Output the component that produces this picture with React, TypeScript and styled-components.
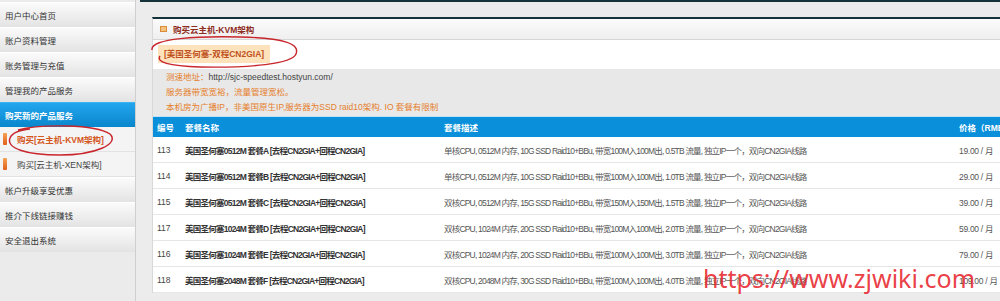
import React from "react";
import styled, { createGlobalStyle } from "styled-components";

const GlobalStyle = createGlobalStyle`
  html, body {
    margin: 0;
    padding: 0;
    background: #ececec;
    font-family: "Liberation Sans", "Noto Sans CJK SC", sans-serif;
  }
`;

type Plan = { id: string; name: string; desc: string; price: string };

const plans: Plan[] = [
  { id: "113", name: "美国圣何塞0512M 套餐A [去程CN2GIA+回程CN2GIA]", desc: "单核CPU, 0512M 内存, 10G SSD Raid10+BBu, 带宽100M入100M出, 0.5TB 流量, 独立IP一个，双向CN2GIA线路", price: "19.00 / 月" },
  { id: "114", name: "美国圣何塞0512M 套餐B [去程CN2GIA+回程CN2GIA]", desc: "单核CPU, 0512M 内存, 10G SSD Raid10+BBu, 带宽100M入100M出, 1.0TB 流量, 独立IP一个，双向CN2GIA线路", price: "29.00 / 月" },
  { id: "115", name: "美国圣何塞0512M 套餐C [去程CN2GIA+回程CN2GIA]", desc: "双核CPU, 0512M 内存, 15G SSD Raid10+BBu, 带宽150M入150M出, 1.5TB 流量, 独立IP一个，双向CN2GIA线路", price: "39.00 / 月" },
  { id: "117", name: "美国圣何塞1024M 套餐D [去程CN2GIA+回程CN2GIA]", desc: "双核CPU, 1024M 内存, 20G SSD Raid10+BBu, 带宽100M入100M出, 2.0TB 流量, 独立IP一个，双向CN2GIA线路", price: "59.00 / 月" },
  { id: "116", name: "美国圣何塞1024M 套餐E [去程CN2GIA+回程CN2GIA]", desc: "双核CPU, 1024M 内存, 20G SSD Raid10+BBu, 带宽100M入100M出, 3.0TB 流量, 独立IP一个，双向CN2GIA线路", price: "79.00 / 月" },
  { id: "118", name: "美国圣何塞2048M 套餐F [去程CN2GIA+回程CN2GIA]", desc: "双核CPU, 2048M 内存, 30G SSD Raid10+BBu, 带宽100M入100M出, 4.0TB 流量, 独立IP一个，双向CN2GIA线路", price: "109.00 / 月" },
];

const App = () => {
  return (
    <Page>
      <GlobalStyle />
      <Sidebar>
        <MenuItem>用户中心首页</MenuItem>
        <MenuItem>账户资料管理</MenuItem>
        <MenuItem>账务管理与充值</MenuItem>
        <MenuItem>管理我的产品服务</MenuItem>
        <MenuItem active>购买新的产品服务</MenuItem>
        <SubItem current>
          <SubIcon />
          购买[云主机-KVM架构]
        </SubItem>
        <SubItem>
          <SubIcon />
          购买[云主机-XEN架构]
        </SubItem>
        <MenuItem>帐户升级享受优惠</MenuItem>
        <MenuItem>推介下线链接赚钱</MenuItem>
        <MenuItem>安全退出系统</MenuItem>
      </Sidebar>

      <Main>
        <Panel>
          <PanelHeader>
            <HeaderIcon />
            购买云主机-KVM架构
          </PanelHeader>
          <TagStrip>
            <Tag>[美国圣何塞-双程CN2GIA]</Tag>
          </TagStrip>
          <Info>
            <InfoLine>
              测速地址：<Url>http://sjc-speedtest.hostyun.com/</Url>
            </InfoLine>
            <InfoLine>服务器带宽宽裕，流量管理宽松。</InfoLine>
            <InfoLine>本机房为广播IP，非美国原生IP,服务器为SSD raid10架构. IO 套餐有限制</InfoLine>
          </Info>
          <Table>
            <HeadRow>
              <Cell>编号</Cell>
              <Cell>套餐名称</Cell>
              <Cell>套餐描述</Cell>
              <Cell>价格（RMB)</Cell>
            </HeadRow>
            {plans.map((p) => (
              <Row key={p.id}>
                <Cell>{p.id}</Cell>
                <NameCell>{p.name}</NameCell>
                <DescCell>{p.desc}</DescCell>
                <PriceCell>{p.price}</PriceCell>
              </Row>
            ))}
          </Table>
        </Panel>
      </Main>

      <Marks width="1000" height="301" viewBox="0 0 1000 301">
        <path d="M152 50 C150 38, 200 36, 240 37 C285 38, 300 44, 296 54 C292 64, 250 68, 200 67 C168 66, 156 62, 160 56" fill="none" stroke="#c8262c" strokeWidth="1.4" />
        <path d="M18 130 C40 124, 95 124, 110 134 C120 144, 95 155, 60 155 C25 155, 6 148, 10 138 C12 133, 20 130, 30 129" fill="none" stroke="#c8262c" strokeWidth="1.4" />
      </Marks>
      <Watermark>https://www.zjwiki.com</Watermark>
    </Page>
  );
};

export default App;

const Page = styled.div`
  position: relative;
  display: flex;
  gap: 4px;
  width: 1000px;
  height: 301px;
  overflow: hidden;
  background: #ececec;
`;

const Sidebar = styled.div`
  flex: 0 0 135px;
  padding-top: 2px;
  border-right: 1px solid #cfcfcf;
  background: #ebebeb;
`;

const MenuItem = styled.div<{ active?: boolean }>`
  height: 25px;
  box-sizing: border-box;
  padding-left: 5px;
  display: flex;
  align-items: center;
  font-size: 8.5px;
  border-top: 1px solid ${({ active }) => (active ? "#3db3f0" : "#ffffff")};
  color: ${({ active }) => (active ? "#ffffff" : "#333333")};
  font-weight: ${({ active }) => (active ? "bold" : "normal")};
  background: ${({ active }) =>
    active
      ? "linear-gradient(#22a6ee, #0a86cc)"
      : "linear-gradient(#fbfbfb, #e3e3e3)"};
`;

const SubItem = styled.div<{ current?: boolean }>`
  height: 25px;
  box-sizing: border-box;
  display: flex;
  align-items: center;
  gap: 10px;
  padding-left: 3px;
  font-size: 8.5px;
  background: #f4f4f4;
  border-bottom: 1px solid #e2e2e2;
  color: ${({ current }) => (current ? "#d4581e" : "#444444")};
  font-weight: ${({ current }) => (current ? "bold" : "normal")};
`;

const SubIcon = styled.span`
  width: 4px;
  height: 12px;
  border-radius: 1px;
  background: linear-gradient(#f6a253, #e0601c);
`;

const Main = styled.div`
  flex: 1;
  min-width: 0;
  border-top: 2px solid #17333a;
  padding: 15px 0 0 12px;
`;

const Panel = styled.div`
  width: 880px;
  border-top: 2px solid #17333a;
  border-left: 1px solid #d8d8d8;
  background: #ffffff;
`;

const PanelHeader = styled.div`
  height: 21px;
  box-sizing: border-box;
  display: flex;
  align-items: center;
  gap: 6px;
  padding-left: 7px;
  border-bottom: 1px solid #d6d6d6;
  background: linear-gradient(#fbfbfb, #efefef);
  color: #8e2c1e;
  font-weight: bold;
  font-size: 8.5px;
`;

const HeaderIcon = styled.span`
  width: 5px;
  height: 4px;
  border: 1px solid #d98b3a;
  background: #f3c27c;
`;

const TagStrip = styled.div`
  height: 29px;
  box-sizing: border-box;
  display: flex;
  align-items: flex-end;
  padding: 0 0 6px 5px;
  background: #ffffff;
`;

const Tag = styled.div`
  height: 18px;
  line-height: 18px;
  padding: 0 6px;
  background: #fde2bb;
  color: #c0521e;
  font-weight: bold;
  font-size: 8.5px;
`;

const Info = styled.div`
  padding: 1px 0 1px 13px;
  background: #e8e8e8;
  border-bottom: 1px solid #bfe4f6;
`;

const InfoLine = styled.div`
  height: 15px;
  line-height: 15px;
  font-size: 8.5px;
  color: #e6802c;
`;

const Url = styled.span`
  color: #444444;
`;

const Table = styled.div`
  display: flex;
  flex-direction: column;
`;

const Row = styled.div`
  display: grid;
  grid-template-columns: 28px 259px 515px 1fr;
  align-items: center;
  height: 26px;
  box-sizing: border-box;
  padding-left: 4px;
  border-bottom: 1px solid #e6e6e6;
  background: #ffffff;
  font-size: 8.5px;
  color: #444444;
`;

const HeadRow = styled(Row)`
  height: 20px;
  background: #0a90da;
  border-bottom: none;
  color: #ffffff;
  font-weight: bold;
`;

const Cell = styled.div`
  white-space: nowrap;
`;

const NameCell = styled(Cell)`
  font-weight: bold;
  color: #333333;
  letter-spacing: -0.75px;
`;

const DescCell = styled(Cell)`
  color: #555555;
  letter-spacing: -0.8px;
`;

const PriceCell = styled(Cell)`
  color: #555555;
  letter-spacing: -0.3px;
`;

const Marks = styled.svg`
  position: absolute;
  left: 0;
  top: 0;
  pointer-events: none;
`;

const Watermark = styled.div`
  position: absolute;
  left: 703px;
  top: 263px;
  font-family: "Noto Sans", sans-serif;
  font-size: 25px;
  line-height: 30px;
  color: rgba(232, 40, 48, 0.9);
  pointer-events: none;
`;
